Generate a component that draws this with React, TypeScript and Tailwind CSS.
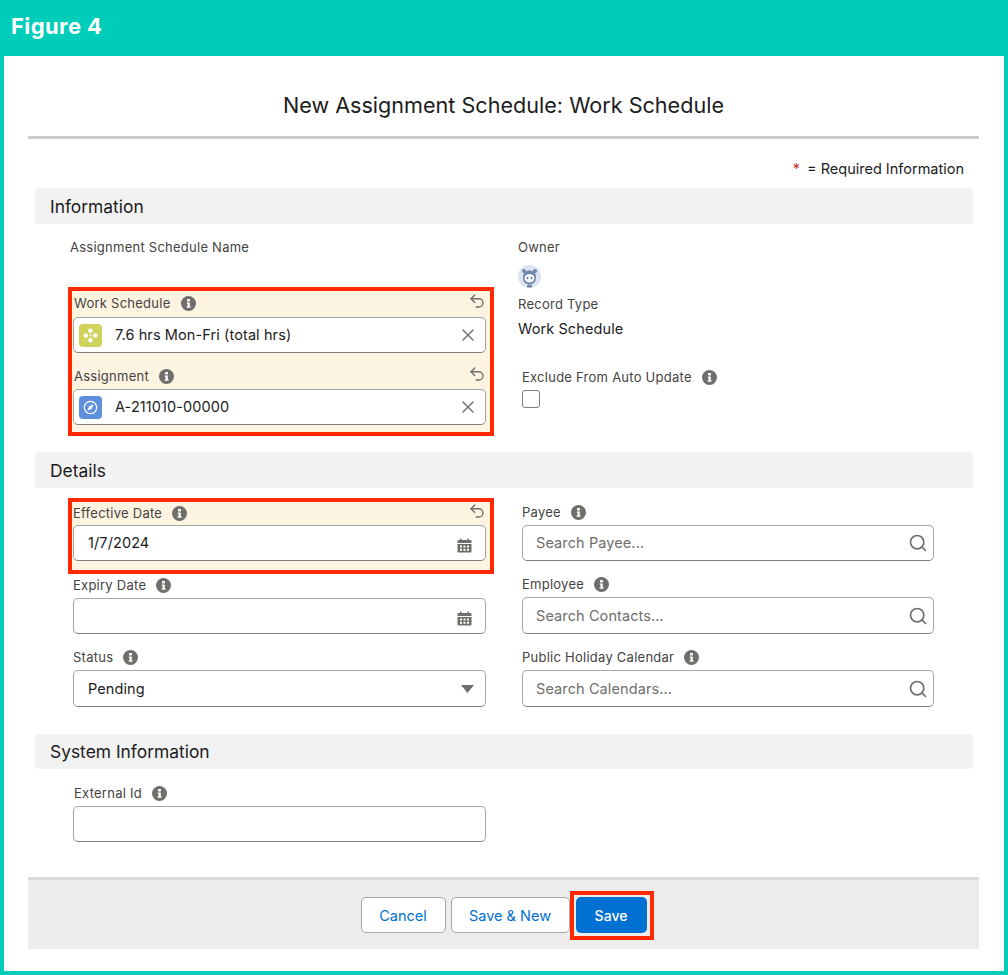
import { Search, Undo2, X } from "lucide-react";
import type { ReactNode } from "react";

const inputCls =
  "flex h-[36px] w-[413px] items-center rounded-[5px] border border-[#a8a6a4] border-b-[#807e7c] bg-white text-[14.5px] tracking-[0.1px] text-[#1c1c1c]";
const labelCls = "text-[13px] tracking-[0.25px] text-[#444341]";

function InfoIcon() {
  return (
    <svg width="15" height="15" viewBox="0 0 15 15" className="shrink-0">
      <circle cx="7.5" cy="7.5" r="7.5" fill="#706e6b" />
      <rect x="6" y="3" width="3" height="2.4" rx="0.6" fill="#fff" />
      <path d="M5.8 6.4H8.8V10.4H9.6V11.8H5.6V10.4H6.5V7.7H5.8Z" fill="#fff" />
    </svg>
  );
}

function CalendarIcon() {
  return (
    <svg width="15" height="15" viewBox="0 0 15 15" className="shrink-0">
      <rect x="3" y="0.5" width="1.6" height="3" rx="0.5" fill="#706e6b" />
      <rect x="10.4" y="0.5" width="1.6" height="3" rx="0.5" fill="#706e6b" />
      <path d="M1.5 2H13.5A1 1 0 0 1 14.5 3V5H0.5V3A1 1 0 0 1 1.5 2Z" fill="#706e6b" />
      <path d="M0.5 6H14.5V13.5A1 1 0 0 1 13.5 14.5H1.5A1 1 0 0 1 0.5 13.5Z" fill="#706e6b" />
      <g fill="#fff">
        <rect x="3" y="7.5" width="2" height="2" />
        <rect x="6.5" y="7.5" width="2" height="2" />
        <rect x="10" y="7.5" width="2" height="2" />
        <rect x="3" y="10.8" width="2" height="2" />
        <rect x="6.5" y="10.8" width="2" height="2" />
        <rect x="10" y="10.8" width="2" height="2" />
      </g>
    </svg>
  );
}

function ScheduleBadge() {
  return (
    <svg width="23" height="23" viewBox="0 0 23 23" className="shrink-0">
      <rect width="23" height="23" rx="4" fill="#cfd25c" />
      <g fill="#fff">
        <circle cx="11.5" cy="6.8" r="2.2" />
        <circle cx="6.8" cy="11.5" r="2.2" />
        <circle cx="16.2" cy="11.5" r="2.2" />
        <circle cx="11.5" cy="16.2" r="2.2" />
        <circle cx="11.5" cy="11.5" r="1" />
      </g>
    </svg>
  );
}

function CompassBadge() {
  return (
    <svg width="23" height="23" viewBox="0 0 23 23" className="shrink-0">
      <rect width="23" height="23" rx="4" fill="#5f8fdc" />
      <circle cx="11.5" cy="11.5" r="6.2" fill="none" stroke="#fff" strokeWidth="1.3" />
      <path d="M14.8 8.2L12.8 12.8L8.2 14.8L10.2 10.2Z" fill="#fff" />
    </svg>
  );
}

function Avatar() {
  return (
    <svg width="23" height="23" viewBox="0 0 23 23" className="shrink-0">
      <circle cx="11.5" cy="11.5" r="11.5" fill="#dbe4f0" />
      <circle cx="6" cy="6" r="2" fill="#6f84a8" />
      <circle cx="17" cy="6" r="2" fill="#6f84a8" />
      <path d="M5 12.5C5 8 8 5.5 11.5 5.5S18 8 18 12.5 15 19.5 11.5 19.5 5 17 5 12.5Z" fill="#6f84a8" />
      <ellipse cx="11.5" cy="13.3" rx="5" ry="4.2" fill="#f3f6fa" />
      <circle cx="9.5" cy="13" r="0.9" fill="#54698d" />
      <circle cx="13.5" cy="13" r="0.9" fill="#54698d" />
      <rect x="9" y="20" width="5" height="2.4" rx="1" fill="#6f84a8" />
    </svg>
  );
}

function Label({ text, left = 0, undo = false }: { text: string; left?: number; undo?: boolean }) {
  return (
    <div className="flex h-[24px] w-[413px] items-center gap-[10px] pb-[1px]">
      <span className={labelCls} style={{ marginLeft: left }}>
        {text}
      </span>
      <InfoIcon />
      {undo && <Undo2 size={18} strokeWidth={1.8} className="ml-auto mb-[5px] text-[#706e6b]" />}
    </div>
  );
}

function SectionBar({ children, short = false }: { children: ReactNode; short?: boolean }) {
  return (
    <div
      className={`mx-[7px] flex w-[938px] items-center rounded-[4px] bg-[#f2f2f2] pl-[15px] pt-[2px] text-[17.4px] text-[#1c1c1c] ${
        short ? "h-[35px]" : "h-[36px]"
      }`}
    >
      {children}
    </div>
  );
}

function Lookup({ badge, text }: { badge: ReactNode; text: string }) {
  return (
    <div className={`${inputCls} pl-[5px] pr-[7px]`}>
      {badge}
      <span className="ml-[13px]">{text}</span>
      <X size={20} strokeWidth={1.6} className="ml-auto text-[#706e6b]" />
    </div>
  );
}

function DateInput({ value }: { value?: string }) {
  return (
    <div className={`${inputCls} pl-[14px] pr-[13px]`}>
      {value && <span>{value}</span>}
      <span className="ml-auto mt-[4px]">
        <CalendarIcon />
      </span>
    </div>
  );
}

function SearchInput({ placeholder, tall = false }: { placeholder: string; tall?: boolean }) {
  return (
    <div className={`${inputCls} max-w-[412px] pl-[13px] pr-[5px] ${tall ? "h-[37px]" : ""}`}>
      <span className="text-[#706e6b]">{placeholder}</span>
      <Search size={20} strokeWidth={2} className="ml-auto text-[#706e6b]" />
    </div>
  );
}

export default function App() {
  return (
    <div className="flex h-[975px] w-[1008px] flex-col bg-[#00cdb9] px-[4px] pb-[4px] font-['Inter',sans-serif]">
      <div className="flex h-[56px] items-center pb-[4px] pl-[7px] text-[22px] font-bold tracking-[0.4px] text-white">
        Figure 4
      </div>

      <div className="flex-1 bg-white px-[24px]">
        <div className="flex h-[83px] w-[951px] items-center justify-center border-b-[3px] border-[#cccccc] pt-[19px] text-[21.6px] text-[#1c1c1c]">
          New Assignment Schedule: Work Schedule
        </div>

        <div className="flex h-[49px] w-[936px] items-center justify-end gap-[7px] pt-[10px] text-[14.5px] text-[#1c1c1c]">
          <span className="text-[#c23934]">*</span>
          <span>= Required Information</span>
        </div>

        <SectionBar>Information</SectionBar>
        <div className="flex h-[228px]">
          <div className="ml-[40px] w-[450px] pt-[11px]">
            <div className={`${labelCls} ml-[2px] h-[52px] leading-[24px]`}>Assignment Schedule Name</div>
            <div className="h-[149px] w-[426px] border-[4px] border-[#ff2a00] bg-[#fcf3e1] px-[1px]">
              <div className="h-[26px] pt-[1px]">
                <Label text="Work Schedule" left={1} undo />
              </div>
              <Lookup badge={<ScheduleBadge />} text="7.6 hrs Mon-Fri (total hrs)" />
              <div className="h-[12px]" />
              <Label text="Assignment" left={1} undo />
              <Lookup badge={<CompassBadge />} text="A-211010-00000" />
            </div>
          </div>
          <div className="flex flex-col pt-[11px]">
            <div className={`${labelCls} h-[30px] leading-[24px]`}>Owner</div>
            <Avatar />
            <div className={`${labelCls} mt-[4px] h-[24px] leading-[24px]`}>Record Type</div>
            <div className="h-[24px] pt-[1px] text-[14.5px] leading-[24px] tracking-[0.1px] text-[#1c1c1c]">Work Schedule</div>
            <div className="ml-[4px] mt-[26px]">
              <Label text="Exclude From Auto Update" />
              <div className="h-[18px] w-[18px] rounded-[3px] border border-[#807e7c] bg-white" />
            </div>
          </div>
        </div>

        <SectionBar>Details</SectionBar>
        <div className="flex h-[246px]">
          <div className="ml-[40px] w-[454px] pt-[10px]">
            <div className="h-[76px] w-[426px] border-[4px] border-[#ff2a00] bg-[#fcf3e1] px-[1px]">
              <div className="h-[23px]">
                <Label text="Effective Date" undo />
              </div>
              <DateInput value="1/7/2024" />
            </div>
            <div className="ml-[5px]">
              <Label text="Expiry Date" />
              <DateInput />
              <div className="h-[12px]" />
              <Label text="Status" />
              <div className={`${inputCls} h-[37px] pl-[14px] pr-[11px]`}>
                <span>Pending</span>
                <svg width="13" height="8" viewBox="0 0 13 8" className="ml-auto">
                  <path d="M0 0H13L6.5 8Z" fill="#706e6b" />
                </svg>
              </div>
            </div>
          </div>
          <div className="pt-[13px]">
            <Label text="Payee" />
            <SearchInput placeholder="Search Payee..." />
            <div className="h-[12px]" />
            <Label text="Employee" />
            <SearchInput placeholder="Search Contacts..." tall />
            <div className="h-[12px]" />
            <Label text="Public Holiday Calendar" />
            <SearchInput placeholder="Search Calendars..." tall />
          </div>
        </div>

        <SectionBar short>System Information</SectionBar>
        <div className="h-[108px] pl-[45px] pt-[13px]">
          <Label text="External Id" left={1} />
          <div className={inputCls} />
        </div>

        <div className="flex h-[72px] w-[951px] items-center justify-center border-t-[3px] border-[#dddbda] bg-[#eeedec] pl-[7px] pt-[1px] text-[14.5px]">
          <button className="h-[36px] w-[85px] rounded-[5px] border border-[#a8a6a4] bg-white pt-[1px] text-[#0070d2]">Cancel</button>
          <button className="ml-[5px] h-[36px] w-[119px] rounded-[5px] border border-[#a8a6a4] bg-white pt-[1px] text-[#0070d2]">Save &amp; New</button>
          <div className="h-[49px] w-[84px] border-[4px] border-[#ff2a00] p-[2px]">
            <button className="h-[36px] w-[71px] rounded-[5px] bg-[#0070d2] pt-[1px] text-[14px] font-medium text-white">Save</button>
          </div>
        </div>
      </div>
    </div>
  );
}
